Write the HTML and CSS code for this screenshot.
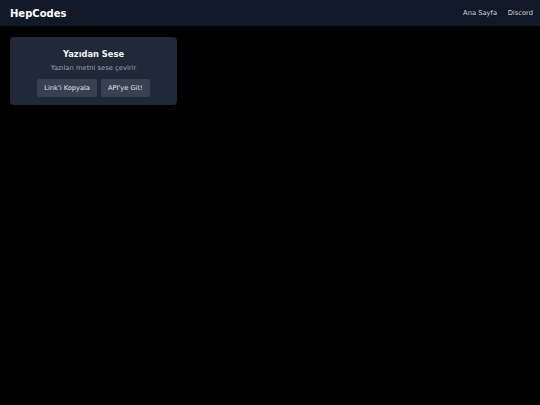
FILE: index.html
```html
<!DOCTYPE html>
<html lang="tr">
<head>
<meta charset="utf-8">
<title>HepCodes</title>
<link rel="stylesheet" href="styles.css">
</head>
<body>
<header class="topbar">
  <div class="brand">HepCodes</div>
  <nav class="nav">
    <a class="nav-link" href="#">Ana Sayfa</a>
    <a class="nav-link" href="#">Discord</a>
  </nav>
</header>
<main class="content">
  <section class="card">
    <h2 class="card-title">Yazıdan Sese</h2>
    <p class="card-desc">Yazılan metni sese çevirir</p>
    <div class="actions">
      <button class="btn">Link'i Kopyala</button>
      <button class="btn">API'ye Git!</button>
    </div>
  </section>
</main>
</body>
</html>
```
FILE: styles.css
```css
* { box-sizing: border-box; }
html, body { margin: 0; padding: 0; }
body {
  background: #000;
  color: #fff;
  font-family: "DejaVu Sans", sans-serif;
  min-height: 405px;
}
.topbar {
  height: 26px;
  background: #111827;
  display: flex;
  align-items: center;
  justify-content: space-between;
  padding: 0 7px 0 10px;
}
.brand {
  font-weight: bold;
  font-size: 10px;
  color: #fff;
}
.nav {
  display: flex;
  gap: 10.5px;
}
.nav-link,
.nav-link:visited {
  color: #d1d5db;
  text-decoration: none;
  font-size: 6.75px;
}
.content {
  padding: 11px 10px;
}
.card {
  width: 167px;
  height: 68px;
  background: #1f2937;
  border-radius: 4px;
  display: flex;
  flex-direction: column;
  align-items: center;
  padding-top: 11px;
}
.card-title {
  margin: 0;
  font-size: 8.3px;
  font-weight: bold;
  line-height: 12px;
  color: #f3f4f6;
}
.card-desc {
  margin: 3px 0 0;
  font-size: 6.75px;
  line-height: 10px;
  color: #9ca3af;
}
.actions {
  display: flex;
  gap: 4px;
  margin-top: 6px;
}
.btn {
  font-family: inherit;
  font-size: 6.65px;
  color: #e5e7eb;
  background: #374151;
  border: none;
  border-radius: 2px;
  height: 18px;
  padding: 0 7px;
}
```
